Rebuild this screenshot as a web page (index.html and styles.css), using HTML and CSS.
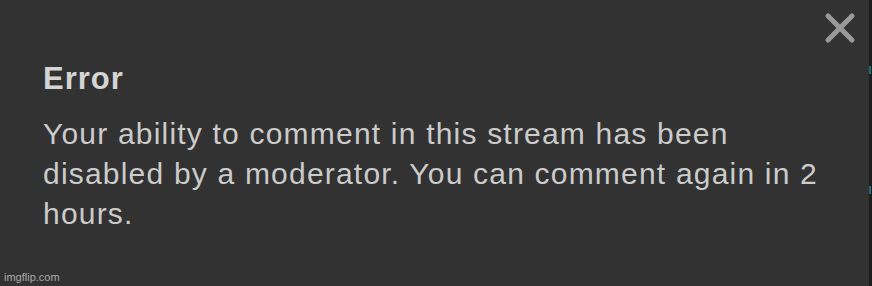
FILE: index.html
```html
<!DOCTYPE html>
<html>
<head>
<meta charset="utf-8">
<link rel="stylesheet" href="styles.css">
</head>
<body>
<div class="dialog">
  <button class="close" aria-label="Close">
    <svg width="34" height="34" viewBox="0 0 34 34"><path d="M5 5 L29 29 M29 5 L5 29" stroke="#9a9a9a" stroke-width="5" stroke-linecap="round" fill="none"/></svg>
  </button>
  <h2 class="title">Error</h2>
  <p class="message">Your ability to comment in this stream has been disabled by a moderator. You can comment again in 2 hours.</p>
  <span class="watermark">imgflip.com</span>
</div>
<div class="edge"><span class="dot dot1"></span><span class="dot dot2"></span></div>
</body>
</html>
```
FILE: styles.css
```css
html, body {
  margin: 0;
  padding: 0;
  background: #323232;
  width: 872px;
  height: 286px;
  overflow: hidden;
}
body {
  display: flex;
  font-family: "Liberation Sans", Arial, sans-serif;
}
.dialog {
  position: relative;
  flex: 1;
  padding: 60px 0 0 43px;
  box-sizing: border-box;
  height: 286px;
}
.close {
  position: absolute;
  top: 11px;
  right: 12px;
  background: none;
  border: 0;
  padding: 0;
  width: 34px;
  height: 34px;
}
.close svg { display: block; }
.title {
  margin: 0;
  font-size: 31px;
  letter-spacing: 1px;
  font-weight: bold;
  color: #d4d4d4;
  line-height: 38px;
}
.message {
  margin: 16px 0 0;
  width: 800px;
  font-size: 30px;
  letter-spacing: 1.2px;
  line-height: 40px;
  color: #cbcbcb;
}
.watermark {
  position: absolute;
  left: 4px;
  bottom: 3px;
  font-size: 11px;
  color: #aaaaaa;
}
.edge {
  width: 3px;
  background: #1c1c1c;
  position: relative;
}
.dot {
  position: absolute;
  left: 0;
  width: 2px;
  height: 8px;
  background: #1f6a7a;
}
.dot1 { top: 66px; }
.dot2 { top: 186px; }
```
